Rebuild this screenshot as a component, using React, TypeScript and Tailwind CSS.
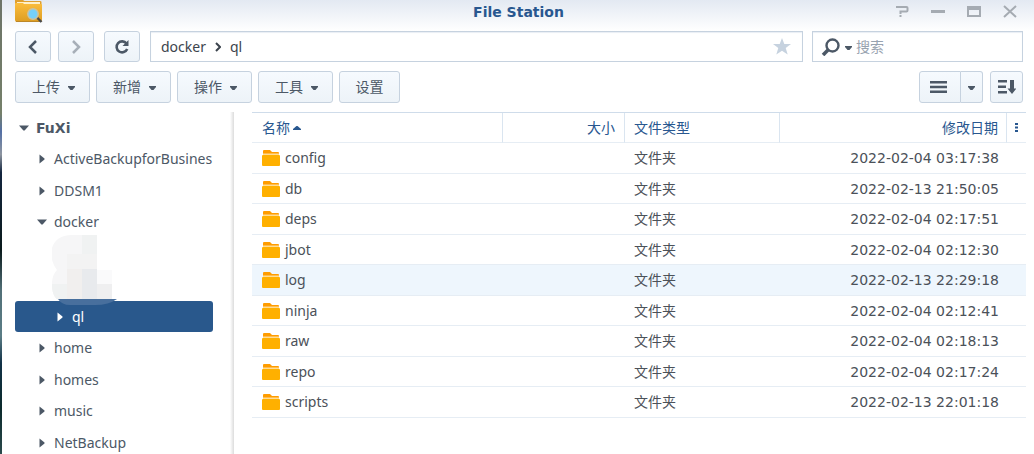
import React from "react";

const files = [
  { name: "config", date: "2022-02-04 03:17:38" },
  { name: "db", date: "2022-02-13 21:50:05" },
  { name: "deps", date: "2022-02-04 02:17:51" },
  { name: "jbot", date: "2022-02-04 02:12:30" },
  { name: "log", date: "2022-02-13 22:29:18", hover: true },
  { name: "ninja", date: "2022-02-04 02:12:41" },
  { name: "raw", date: "2022-02-04 02:18:13" },
  { name: "repo", date: "2022-02-04 02:17:24" },
  { name: "scripts", date: "2022-02-13 22:01:18" },
];

type Node = { name: string; level: number; open?: boolean; selected?: boolean; hidden?: boolean };

const tree: Node[] = [
  { name: "FuXi", level: 0, open: true },
  { name: "ActiveBackupforBusines", level: 1 },
  { name: "DDSM1", level: 1 },
  { name: "docker", level: 1, open: true },
  { name: "", level: 2, hidden: true },
  { name: "", level: 2, hidden: true },
  { name: "ql", level: 2, selected: true },
  { name: "home", level: 1 },
  { name: "homes", level: 1 },
  { name: "music", level: 1 },
  { name: "NetBackup", level: 1 },
];

const indents = ["pl-1", "pl-[22px]", "pl-10"];

const btn =
  "flex items-center justify-center rounded-[3px] border border-[#c6d2df] bg-linear-to-b from-[#f6fafe] to-[#edf3f8] text-[#4c5866]";

function Caret() {
  return (
    <svg width="7" height="4" viewBox="0 0 7 4" className="mt-[2px] shrink-0" aria-hidden="true">
      <path d="M0 0h7v1L4.5 4h-2L0 1z" fill="currentColor" />
    </svg>
  );
}

function TreeArrow({ open }: { open?: boolean }) {
  return (
    <svg width="10" height="10" viewBox="0 0 10 10" className="shrink-0" aria-hidden="true">
      <path d={open ? "M0 2.5h10L5.6 7.5H4.4z" : "M2.5 0.5L7.5 4.4v1.2L2.5 9.5z"} fill="currentColor" />
    </svg>
  );
}

function Folder() {
  return (
    <svg width="18" height="16" viewBox="0 0 18 16" className="shrink-0" aria-hidden="true">
      <path d="M1 1Q1 0 2 0h6l2 2h6q1 0 1 1v3H1z" fill="#ff9c00" />
      <path d="M1 3.500h16V6H1z" fill="#ffdc96" />
      <path d="M0 6q0-1 1-1h16q1 0 1 1v9q0 1-1 1H1q-1 0-1-1z" fill="#ffb000" />
    </svg>
  );
}

function AppIcon() {
  return (
    <svg width="28" height="24" viewBox="0 0 28 24" aria-hidden="true">
      <defs>
        <linearGradient id="folder" x1="0" y1="0" x2="0" y2="1">
          <stop offset="0" stopColor="#fbbd3c" />
          <stop offset="1" stopColor="#dd9d22" />
        </linearGradient>
      </defs>
      <path d="M0 0h8l1.500 1H25q1.500 0 1.500 1v6H0z" fill="#e0a02e" />
      <path d="M2 2h23v3H2z" fill="#fff0c8" />
      <path d="M0 4q0-1 1-1h7l1 1h17q1 0 1 1v15q0 2-2 2H2q-2 0-2-2z" fill="url(#folder)" />
      <path d="M1 21.500h25" stroke="#bd8727" />
      <path d="M22 17.500l4.500 4.500" stroke="#4a4a4a" strokeWidth="2.400" />
      <circle cx="18" cy="14" r="5.200" fill="#74d0fb" stroke="#c9c2a4" strokeWidth="1.500" />
    </svg>
  );
}

function MenuButton({ label, menu = true }: { label: string; menu?: boolean }) {
  return (
    <button type="button" className={`${btn} h-8 text-sm ${menu ? "w-[75px] gap-2 pl-[2px]" : "w-[61px]"}`}>
      {label}
      {menu && <Caret />}
    </button>
  );
}

function TitleBar() {
  return (
    <header className="grid h-[31px] shrink-0 grid-cols-[1fr_auto_1fr] items-start bg-linear-to-b from-[#e3e9f2] to-white pr-3 pl-[13px]">
      <AppIcon />
      <h1 className="pt-[2px] font-['DejaVu_Sans',sans-serif] text-sm leading-5 font-bold text-[#28578f]">File Station</h1>
      <div className="flex justify-end gap-[22px] pt-1 pr-[5px] text-[#a5abb2]">
        <button type="button" aria-label="帮助">
          <svg width="14" height="14" viewBox="0 0 14 14" fill="none" stroke="currentColor" strokeWidth="2">
            <path d="M1 3h10.500q1 0 1 1v2.500q0 1-1 1H5.500V10M5.500 11v2" />
          </svg>
        </button>
        <button type="button" aria-label="最小化">
          <svg width="14" height="14" viewBox="0 0 14 14">
            <path d="M0 6h14v3H0z" fill="currentColor" />
          </svg>
        </button>
        <button type="button" aria-label="最大化">
          <svg width="14" height="14" viewBox="0 0 14 14">
            <path d="M0 2h14v11H0zM2 6v5h10V6z" fillRule="evenodd" fill="currentColor" />
          </svg>
        </button>
        <button type="button" aria-label="关闭">
          <svg width="14" height="14" viewBox="0 0 14 14" fill="none" stroke="currentColor" strokeWidth="2">
            <path d="M1 2l12 11M13 2L1 13" />
          </svg>
        </button>
      </div>
    </header>
  );
}

function NavBar() {
  return (
    <div className="flex h-[31px] shrink-0 pr-[11px] pl-[13px]">
      <button type="button" aria-label="后退" className={`${btn} w-9`}>
        <svg width="10" height="14" viewBox="0 0 10 14" fill="none" stroke="currentColor" strokeWidth="2.500">
          <path d="M8 1L2 7l6 6" />
        </svg>
      </button>
      <button type="button" aria-label="前进" className={`${btn} ml-[7px] w-9`}>
        <svg width="10" height="14" viewBox="0 0 10 14" fill="none" stroke="#a7afb8" strokeWidth="2.500">
          <path d="M2 1l6 6-6 6" />
        </svg>
      </button>
      <button type="button" aria-label="刷新" className={`${btn} ml-[10px] w-9`}>
        <svg width="16" height="16" viewBox="0 0 16 16" fill="none" stroke="currentColor" strokeWidth="2.600">
          <path d="M12.500 4.500A5.500 5.500 0 1 0 13.200 10" />
          <path d="M14.500 1v6H8.500z" fill="currentColor" stroke="none" />
        </svg>
      </button>
      <nav
        aria-label="路径"
        className="ml-[10px] flex min-w-0 flex-1 items-center border border-[#c6d2df] bg-white pr-[11px] pl-[10px] text-sm text-[#3c444d] shadow-[inset_0_1px_1px_#e9eef4]"
      >
        <a href="#docker">docker</a>
        <svg width="6" height="10" viewBox="0 0 6 10" fill="none" stroke="currentColor" strokeWidth="2" className="mx-[9px]" aria-hidden="true">
          <path d="M1 1l4 4-4 4" />
        </svg>
        <a href="#ql">ql</a>
        <button type="button" aria-label="收藏" className="ml-auto text-[#c6d2df]">
          <svg width="18" height="17" viewBox="0 0 18 17">
            <path d="M9 0l2.300 6H18l-5.300 4 2 6.500L9 12.700 3.300 16.500l2-6.500L0 6h6.700z" fill="currentColor" />
          </svg>
        </button>
      </nav>
      <label className="ml-[9px] flex w-[211px] items-center border border-[#c6d2df] bg-white pl-2 text-[#4c5866] shadow-[inset_0_1px_1px_#e9eef4]">
        <svg width="19" height="18" viewBox="0 0 19 18" fill="none" stroke="currentColor" aria-label="搜索" className="shrink-0">
          <circle cx="11.500" cy="7.500" r="6" strokeWidth="2.400" />
          <path d="M7 12L2 17" strokeWidth="3.600" />
        </svg>
        <span className="mr-1 ml-[5px]">
          <Caret />
        </span>
        <input type="text" placeholder="搜索" className="w-full min-w-0 text-sm outline-none placeholder:text-[#98a3b0]" />
      </label>
    </div>
  );
}

function Toolbar() {
  return (
    <div className="flex shrink-0 gap-[6px] pt-[9px] pr-[11px] pb-[9px] pl-[13px]">
      <MenuButton label="上传" />
      <MenuButton label="新增" />
      <MenuButton label="操作" />
      <MenuButton label="工具" />
      <MenuButton label="设置" menu={false} />
      <div className="mr-px ml-auto flex">
        <button type="button" aria-label="列表视图" className={`${btn} h-8 w-[42px] rounded-r-none pr-1`}>
          <svg width="17" height="12" viewBox="0 0 17 12" fill="currentColor">
            <path d="M0 0h17v2.500H0zM0 4.800h17v2.400H0zM0 9.500h17V12H0z" />
          </svg>
        </button>
        <button type="button" aria-label="视图选项" className={`${btn} h-8 w-[22px] rounded-l-none border-l-0`}>
          <Caret />
        </button>
      </div>
      <button type="button" aria-label="排序" className={`${btn} h-8 w-[33px]`}>
        <svg width="18" height="14" viewBox="0 0 18 14" fill="currentColor">
          <path d="M0 0h9v2.400H0zM0 5.500h8v2.600H0zM0 11h9v2.500H0zM12 0h4v8.500h2.500L14 14 9.500 8.500H12z" />
        </svg>
      </button>
    </div>
  );
}

function Mosaic() {
  return (
    <svg
      width="66"
      height="72"
      viewBox="0 0 66 72"
      className="absolute top-[123px] left-[50px]"
      aria-hidden="true"
    >
      <defs>
        <clipPath id="blob">
          <path d="M45 0H20C-3 0-5 22 5 35-2 41-2 60 6 65q4 5 12 5h25q14 0 22-6L60 64V35H45z" />
        </clipPath>
      </defs>
      <g clipPath="url(#blob)">
        <path d="M0 0h66v66H0z" fill="#f6f6f7" />
        <path d="M30 0h15v19H30z" fill="#f0f2f2" />
        <path d="M15 19h30v15H15z" fill="#f3f3f3" />
        <path d="M15 34h15v30H15z" fill="#f1efee" />
        <path d="M30 34h15v30H30z" fill="#e8eaed" />
        <path d="M45 34h21v15H45z" fill="#fafafb" />
        <path d="M45 49h21v15H45z" fill="#efeff0" />
        <path d="M0 49h15v15H0z" fill="#f0f2f2" />
      </g>
      <path d="M6 64h59q-8 6-22 6H18q-8 0-12-6z" fill="#486f9d" />
    </svg>
  );
}

function Sidebar() {
  return (
    <nav
      aria-label="文件夹"
      className="relative w-[232px] shrink-0 overflow-hidden bg-linear-to-l from-[#dcdcdc] to-white to-[4px] pr-[21px] pl-[13px]"
    >
      <ul>
        {tree.map((n, i) => (
          <li
            key={i}
            className={`rounded-[3px] odd:h-[31px] even:h-8 ${n.selected ? "bg-[#29588c] text-white" : "text-[#4c5866]"}`}
          >
            {!n.hidden && (
              <a
                href={`#${n.name}`}
                className={`flex h-full items-center gap-[7px] text-sm whitespace-nowrap ${indents[n.level]} ${n.level === 0 ? "font-['DejaVu_Sans',sans-serif] font-bold" : ""}`}
              >
                <TreeArrow open={n.open} />
                {n.name}
              </a>
            )}
          </li>
        ))}
      </ul>
      <Mosaic />
    </nav>
  );
}

function FileTable() {
  const head = "border-r border-b border-r-[#dae5f0] border-b-[#e6edf4] py-0 font-normal";
  const cell = "border-b border-[#e6edf4] py-0";
  return (
    <main className="min-w-0 flex-1 pr-2 pl-[18px]">
      <table className="w-full table-fixed border-separate border-spacing-0 border-t border-[#cfdcea] text-sm">
        <thead className="text-[#28578f]">
          <tr className="h-[30px]">
            <th scope="col" className={`${head} pl-[10px] text-left`}>
              <span className="flex items-center gap-[3px]">
                名称
                <svg width="8" height="4" viewBox="0 0 8 4" aria-hidden="true">
                  <path d="M3.500 0h1L8 3v1H0V3z" fill="currentColor" />
                </svg>
              </span>
            </th>
            <th scope="col" className={`${head} w-[122px] pr-[9px] text-right`}>大小</th>
            <th scope="col" className={`${head} w-[155px] pl-[9px] text-left`}>文件类型</th>
            <th scope="col" className={`${head} w-[227px] pr-2 text-right`}>修改日期</th>
            <th scope="col" className={`${cell} w-[19px] px-0`}>
              <button type="button" aria-label="选择列" className="flex w-full justify-center">
                <svg width="3" height="9" viewBox="0 0 3 9" fill="currentColor">
                  <path d="M0 0h3v2H0zM0 3.500h3v2H0zM0 7h3v2H0z" />
                </svg>
              </button>
            </th>
          </tr>
        </thead>
        <tbody className="text-[#4b5159]">
          {files.map((f) => (
            <tr key={f.name} className={`odd:h-[31px] even:h-[30px] ${f.hover ? "bg-[#eef6fd]" : ""}`}>
              <td className={`${cell} pr-2 pl-[10px]`}>
                <span className="flex items-center gap-[5px]">
                  <Folder />
                  {f.name}
                </span>
              </td>
              <td className={`${cell} px-0`} />
              <td className={`${cell} px-[9px]`}>文件夹</td>
              <td className={`${cell} pr-2 text-right font-['DejaVu_Sans',sans-serif] whitespace-nowrap`}>{f.date}</td>
              <td className={`${cell} px-0`} />
            </tr>
          ))}
        </tbody>
      </table>
    </main>
  );
}

export default function App() {
  return (
    <div className="flex h-screen overflow-hidden bg-white font-['Noto_Sans','Noto_Sans_CJK_SC',sans-serif]">
      <div className="w-[2px] shrink-0 bg-[linear-gradient(to_bottom,#6d7468,#75806a_25%,#5470a5_29%,#8d95a0_34%,#14263f_38%,#0a1a1c_55%,#527078_64%,#5b7d86_74%,#123247_80%,#0b2a2c_90%,#2b4a4c)]" />
      <div className="flex min-w-0 flex-1 flex-col">
        <TitleBar />
        <NavBar />
        <Toolbar />
        <div className="flex min-h-0 flex-1">
          <Sidebar />
          <FileTable />
        </div>
      </div>
    </div>
  );
}
